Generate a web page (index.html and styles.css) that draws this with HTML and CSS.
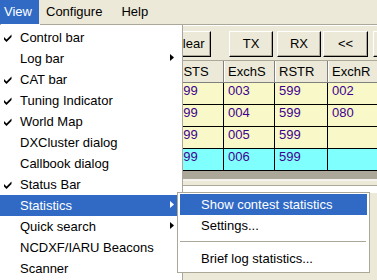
FILE: index.html
```html
<!DOCTYPE html>
<html lang="en">
<head>
  <meta charset="UTF-8" />
  <title>Log - View menu</title>
  <link rel="stylesheet" href="styles.css">
</head>
<body>

  <div class="menubar">
    <span class="mb-item open">View</span>
    <span class="mb-item mb-conf">Configure</span>
    <span class="mb-item mb-help">Help</span>
  </div>

  <div class="toolbar">
    <button class="tb-btn btn-clear">Clear</button>
    <button class="tb-btn btn-tx">TX</button>
    <button class="tb-btn btn-rx">RX</button>
    <button class="tb-btn btn-back">&lt;&lt;</button>
    <button class="tb-btn btn-next"></button>
  </div>

  <div class="log">
    <div class="row head">
      <div class="cell">Call</div>
      <div class="cell">RSTS</div>
      <div class="cell">ExchS</div>
      <div class="cell">RSTR</div>
      <div class="cell">ExchR</div>
    </div>
    <div class="row">
      <div class="cell"></div>
      <div class="cell">599</div>
      <div class="cell">003</div>
      <div class="cell">599</div>
      <div class="cell">002</div>
    </div>
    <div class="row">
      <div class="cell"></div>
      <div class="cell">599</div>
      <div class="cell">004</div>
      <div class="cell">599</div>
      <div class="cell">080</div>
    </div>
    <div class="row">
      <div class="cell"></div>
      <div class="cell">599</div>
      <div class="cell">005</div>
      <div class="cell">599</div>
      <div class="cell"></div>
    </div>
    <div class="row cur">
      <div class="cell"></div>
      <div class="cell">599</div>
      <div class="cell">006</div>
      <div class="cell">599</div>
      <div class="cell"></div>
    </div>
    <div class="log-foot"></div>
  </div>

  <div class="panel">
    <div class="edit"></div>
  </div>

  <!-- View dropdown -->
  <div class="menu main-menu">
    <div class="mi"><svg class="chk" width="8" height="8" viewBox="0 0 8 8"><polygon points="0,3 2.5,5.5 7.5,0.5 7.5,3 2.5,8 0,5.5"/></svg>Control bar</div>
    <div class="mi">Log bar<svg class="arr" width="4" height="7" viewBox="0 0 4 7"><polygon points="0,0 4,3.5 0,7"/></svg></div>
    <div class="mi"><svg class="chk" width="8" height="8" viewBox="0 0 8 8"><polygon points="0,3 2.5,5.5 7.5,0.5 7.5,3 2.5,8 0,5.5"/></svg>CAT bar</div>
    <div class="mi"><svg class="chk" width="8" height="8" viewBox="0 0 8 8"><polygon points="0,3 2.5,5.5 7.5,0.5 7.5,3 2.5,8 0,5.5"/></svg>Tuning Indicator</div>
    <div class="mi"><svg class="chk" width="8" height="8" viewBox="0 0 8 8"><polygon points="0,3 2.5,5.5 7.5,0.5 7.5,3 2.5,8 0,5.5"/></svg>World Map</div>
    <div class="mi">DXCluster dialog</div>
    <div class="mi">Callbook dialog</div>
    <div class="mi"><svg class="chk" width="8" height="8" viewBox="0 0 8 8"><polygon points="0,3 2.5,5.5 7.5,0.5 7.5,3 2.5,8 0,5.5"/></svg>Status Bar</div>
    <div class="mi hot">Statistics<svg class="arr" width="4" height="7" viewBox="0 0 4 7"><polygon points="0,0 4,3.5 0,7"/></svg></div>
    <div class="mi">Quick search<svg class="arr" width="4" height="7" viewBox="0 0 4 7"><polygon points="0,0 4,3.5 0,7"/></svg></div>
    <div class="mi">NCDXF/IARU Beacons</div>
    <div class="mi">Scanner</div>
  </div>

  <!-- Statistics submenu -->
  <div class="menu sub-menu">
    <div class="mi hot">Show contest statistics</div>
    <div class="mi">Settings...</div>
    <div class="sep"></div>
    <div class="mi">Brief log statistics...</div>
  </div>

</body>
</html>
```

FILE: styles.css
```css
* { margin:0; padding:0; box-sizing:border-box; }
body { font-family:"Liberation Sans", Arial, sans-serif; font-size:13px; color:#000; background:#ece9d8; width:377px; height:280px; overflow:hidden; position:relative; }

/* menu bar */
.menubar { display:flex; height:24px; line-height:24px; white-space:nowrap; }
.mb-item { padding:0 7px; }
.mb-item.open { background:#316ac5; color:#fff; width:39px; padding:0 0 0 4px; }
.mb-conf { padding-right:9px; }
.mb-help { padding-left:10px; }

/* toolbar */
.toolbar { display:flex; height:36px; padding:6px 0 3px; border-top:1px solid #aca899; box-shadow:inset 0 1px #fff; white-space:nowrap; }
.tb-btn { font:inherit; color:#000; background:#ece9d8; height:26px; width:44px; border:1px solid; border-color:#fff #000 #000 #fff; box-shadow:inset -1px -1px #aca899; text-align:center; line-height:22px; flex:none; }
.btn-clear { margin-left:167px; }
.btn-tx { margin-left:18px; }
.btn-rx { margin-left:4px; }
.btn-back { margin-left:2px; width:45px; }
.btn-next { margin-left:5px; }

/* log grid */
.log { white-space:nowrap; }
.row { display:grid; grid-template-columns:171px 52px 51px 53px 60px; height:22px; border-bottom:1px solid #000; background:#f8f8c8; }
.row.cur { background:#80ffff; }
.cell { padding-left:4px; line-height:16px; color:#400090; overflow:hidden; }
.cell + .cell { border-left:1px solid #000; }
.row.head { height:23px; border-top:1px solid #aca899; border-bottom:1px solid #808080; background:#ece9d8; }
.row.head .cell { color:#000; line-height:21px; box-shadow:inset 1px 0 #fff; }
.row.head .cell:nth-child(2) { padding-left:2px; }
.row.head .cell + .cell { border-left-color:#808080; }
.log-foot { height:8px; background:#aca899; }

.panel { height:110px; padding-top:4px; border-top:2px solid #f4f3ee; }
.edit { height:8px; border-top:1px solid #aca899; background:#fff; }

/* popup menus */
.menu { position:absolute; background:#fff; border:1px solid #aca899; white-space:nowrap; }
.main-menu { left:-3px; top:24px; width:186px; height:280px; padding:2px 5px 2px 2px; }
.main-menu::before { content:""; position:absolute; left:3px; top:-1px; width:39px; height:1px; background:#fff; }
.sub-menu { left:177px; top:192px; width:193px; height:81px; padding:1px 2px 3px; }
.mi { position:relative; height:21px; line-height:21px; padding-left:20px; }
.sub-menu .mi { padding-left:21px; }
.mi.hot { background:#316ac5; color:#fff; }
.chk { position:absolute; left:4px; top:7px; fill:#000; }
.arr { position:absolute; right:3px; top:6px; fill:#000; }
.hot .arr { fill:#fff; }
.sep { height:1px; margin:5px 1px 6px 0; background:#aca899; }
```
